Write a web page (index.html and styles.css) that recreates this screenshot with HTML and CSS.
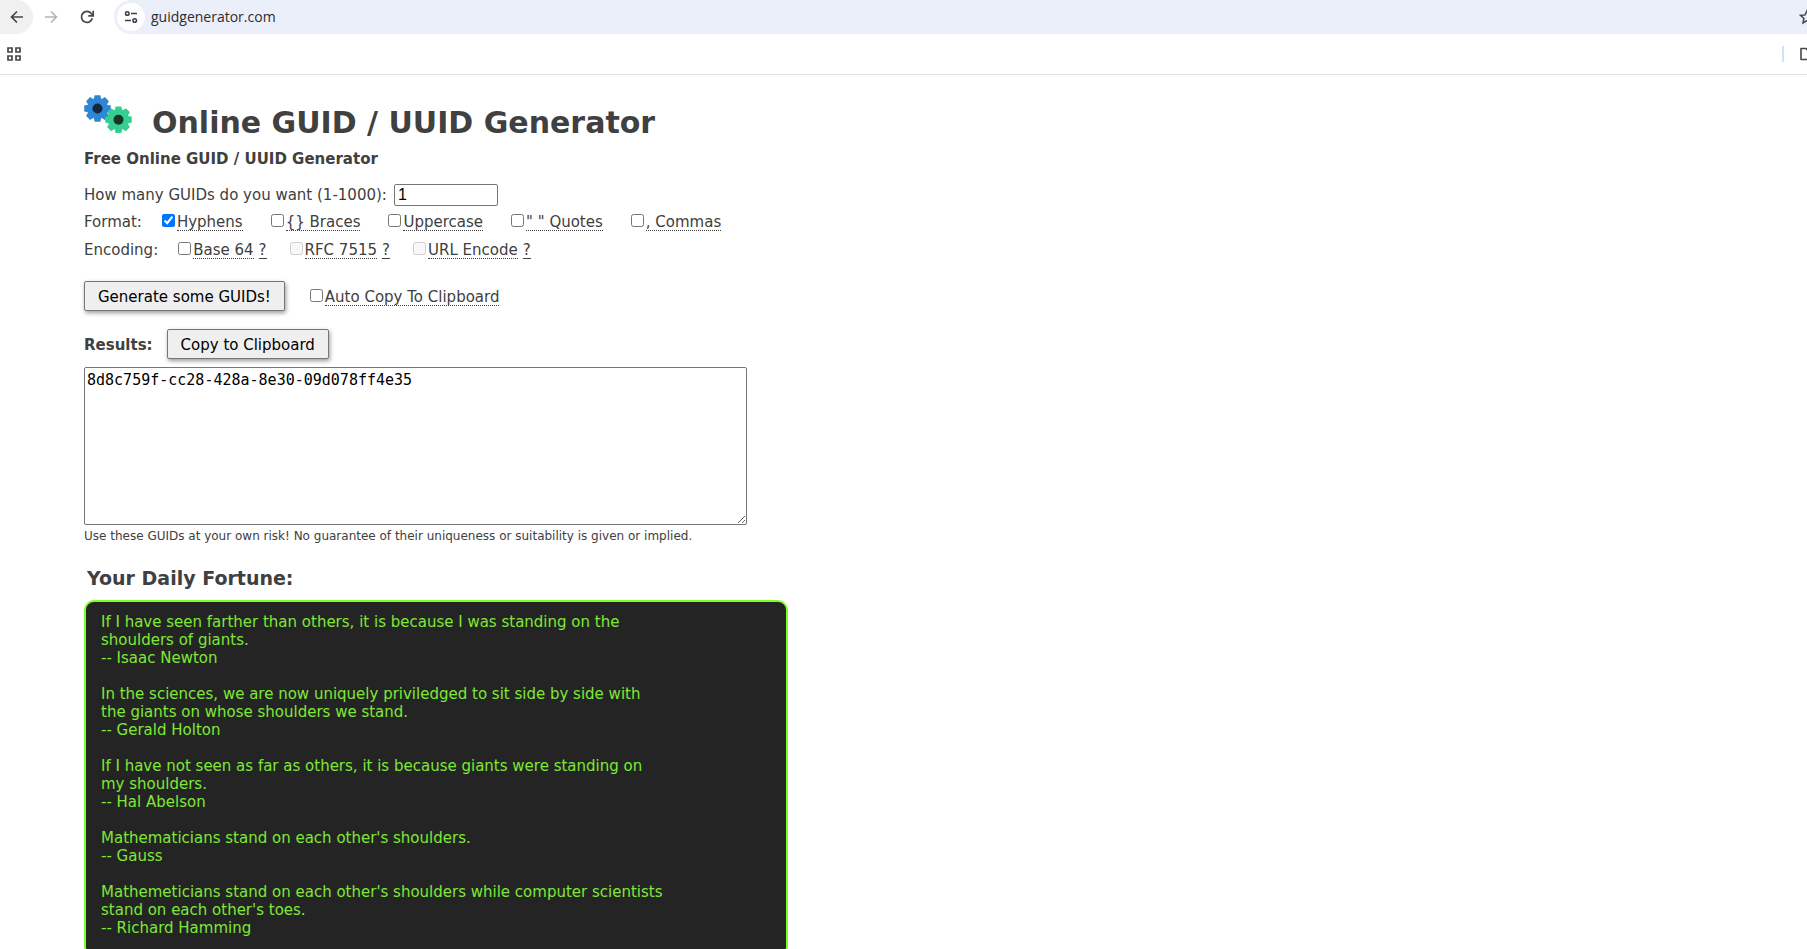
FILE: index.html
```html
<!DOCTYPE html>
<html lang="en">
<head>
<meta charset="utf-8">
<title>Online GUID / UUID Generator</title>
<link rel="stylesheet" href="styles.css">
</head>
<body>
<header class="browser">
  <div class="toolbar">
    <button class="nav-btn nav-active" aria-label="Back"><svg viewBox="0 0 16 16" width="16" height="16"><path d="M14 8H3M8 2.500 2.500 8 8 13.500" fill="none" stroke="#444749" stroke-width="1.700"/></svg></button>
    <button class="nav-btn" aria-label="Forward" disabled><svg viewBox="0 0 16 16" width="16" height="16"><path d="M2 8h11M8 2.500 13.500 8 8 13.500" fill="none" stroke="#b3b3b3" stroke-width="1.600"/></svg></button>
    <button class="nav-btn" aria-label="Reload"><svg viewBox="0 0 16 16" width="16" height="16"><path d="M13.300 9.300A5.500 5.500 0 1 1 12.300 4.500L14 6.300" fill="none" stroke="#444749" stroke-width="1.700"/><path d="M14.200 1.800v5H9.300" fill="none" stroke="#444749" stroke-width="1.700"/></svg></button>
    <div class="address">
      <button class="site-btn" aria-label="View site information"><svg viewBox="0 0 14 14" width="14" height="14"><g fill="none" stroke="#3c3f42" stroke-width="1.500"><circle cx="3.300" cy="3.500" r="1.800"/><path d="M7 3.500h6M1 10.500h6"/><circle cx="10.700" cy="10.500" r="1.800"/></g></svg></button>
      <input class="url" type="text" aria-label="Address" value="guidgenerator.com">
      <button class="edge-btn" aria-label="Bookmark this page"><svg viewBox="0 0 16 16" width="16" height="16"><path d="m8 1.700 1.900 4.200 4.600.5-3.400 3.100.9 4.500-4-2.300L4 14l.9-4.500-3.400-3.100 4.600-.5z" fill="none" stroke="#444749" stroke-width="1.500"/></svg></button>
    </div>
  </div>
  <div class="bookmarks">
    <button class="apps-btn" aria-label="Apps"><svg viewBox="0 0 14 14" width="14" height="14"><path d="M1 1h4v4H1zM9 1h4v4H9zM1 9h4v4H1zM9 9h4v4H9z" fill="none" stroke="#444749" stroke-width="1.700"/></svg></button>
    <span class="divider"></span>
    <button class="edge-btn" aria-label="All bookmarks"><svg viewBox="0 0 16 16" width="16" height="16"><path d="M2 2.500h5l2 2h6v9H2z" fill="none" stroke="#444749" stroke-width="1.600" stroke-linejoin="round"/></svg></button>
  </div>
</header>

<main class="page">
  <div class="title-row">
    <svg class="logo" viewBox="0 0 48 38" width="48" height="38" aria-hidden="true">
      <defs>
        <g id="gear">
          <circle r="10.500"/>
          <g id="teeth"><path d="M-4-8-2.900-13.300h5.800L4-8v16L2.900 13.300h-5.800L-4 8z"/><path d="M-4-8-2.900-13.300h5.800L4-8v16L2.900 13.300h-5.800L-4 8z" transform="rotate(90)"/></g>
          <use href="#teeth" transform="rotate(45)"/>
        </g>
      </defs>
      <g transform="translate(13.500 13.500)"><use href="#gear" fill="#2f86d6"/><circle r="5" fill="#14293d"/></g>
      <g transform="translate(34.500 24.700)"><use href="#gear" fill="#34cf90"/><circle r="5" fill="#163524"/></g>
    </svg>
    <h1 class="title">Online GUID / UUID Generator</h1>
  </div>
  <h2 class="subtitle">Free Online GUID / UUID Generator</h2>

  <form class="form">
    <div class="row count-row"><label for="count">How many GUIDs do you want (1-1000):</label><input class="count" id="count" type="text" inputmode="numeric" value="1"></div>
    <div class="row format-row">
      <span>Format:</span>
      <div class="options">
        <span class="option"><input type="checkbox" id="hyphens" checked><label for="hyphens">Hyphens</label></span>
        <span class="option"><input type="checkbox" id="braces"><label for="braces">{} Braces</label></span>
        <span class="option"><input type="checkbox" id="upper"><label for="upper">Uppercase</label></span>
        <span class="option"><input type="checkbox" id="quotes"><label for="quotes">" " Quotes</label></span>
        <span class="option"><input type="checkbox" id="commas"><label for="commas">, Commas</label></span>
      </div>
    </div>
    <div class="row encoding-row">
      <span>Encoding:</span>
      <div class="options encodings">
        <span class="option"><input type="checkbox" id="base64"><label for="base64">Base 64</label><a class="help" href="#base64">?</a></span>
        <span class="option"><input type="checkbox" id="rfc" disabled><label for="rfc">RFC 7515</label><a class="help" href="#rfc">?</a></span>
        <span class="option"><input type="checkbox" id="urlenc" disabled><label for="urlenc">URL Encode</label><a class="help" href="#urlenc">?</a></span>
      </div>
    </div>
    <div class="row generate-row">
      <button class="action" type="button">Generate some GUIDs!</button>
      <span class="option"><input type="checkbox" id="autocopy"><label for="autocopy">Auto Copy To Clipboard</label></span>
    </div>
    <div class="row results-row">
      <label class="results-label" for="results">Results:</label>
      <button class="action" type="button">Copy to Clipboard</button>
    </div>
    <textarea class="results" id="results" rows="8" spellcheck="false">8d8c759f-cc28-428a-8e30-09d078ff4e35</textarea>
    <p class="note">Use these GUIDs at your own risk! No guarantee of their uniqueness or suitability is given or implied.</p>
  </form>

  <h3 class="fortune-title">Your Daily Fortune:</h3>
  <section class="fortune">
    <p>If I have seen farther than others, it is because I was standing on the<br>shoulders of giants.<br>-- Isaac Newton</p>
    <p>In the sciences, we are now uniquely priviledged to sit side by side with<br>the giants on whose shoulders we stand.<br>-- Gerald Holton</p>
    <p>If I have not seen as far as others, it is because giants were standing on<br>my shoulders.<br>-- Hal Abelson</p>
    <p>Mathematicians stand on each other's shoulders.<br>-- Gauss</p>
    <p>Mathemeticians stand on each other's shoulders while computer scientists<br>stand on each other's toes.<br>-- Richard Hamming</p>
  </section>
</main>
</body>
</html>
```

FILE: styles.css
```css
* { box-sizing: border-box; }
html { overflow: hidden; }
body {
  margin: 0;
  background: #fff;
  color: #404040;
  font-family: Verdana, "DejaVu Sans", sans-serif;
  font-size: 15px;
  line-height: 18px;
}
h1, h2, h3, p { margin: 0; }
button { font: inherit; }
svg { display: block; }

/* Browser chrome */
.browser { border-bottom: 1px solid #dfe1e3; overflow: hidden; }
.browser button { border: 0; padding: 0; background: none; flex: none; }
.toolbar { display: flex; height: 34px; }
.nav-btn {
  display: grid;
  place-items: center;
  width: 36px;
  height: 34px;
}
.browser .nav-active { width: 33px; background: #f0f0f0; border-radius: 0 17px 17px 0; }
.address {
  display: flex;
  flex: 1;
  align-items: center;
  margin-left: 9px;
  padding-left: 3px;
  background: #ebeff9;
  border-radius: 17px 0 0 17px;
}
.browser .site-btn {
  display: grid;
  place-items: center;
  width: 28px;
  height: 28px;
  border-radius: 50%;
  background: #fff;
  margin-right: 6px;
}
.url {
  flex: 1;
  border: 0;
  padding: 0;
  background: none;
  color: #2b2d30;
  font: 14px/20px "Open Sans", "Noto Sans", sans-serif;
}
.browser .edge-btn { margin-right: -8px; }
.bookmarks { display: flex; align-items: center; height: 40px; padding-left: 7px; }
.divider { width: 2px; height: 16px; margin: 0 15px 0 auto; background: #d3e0fa; }

/* Page */
.page { padding: 20px 84px 0; }
.title-row { display: flex; gap: 20px; }
.logo { flex: none; }
.title { font-size: 30px; line-height: 36px; padding-top: 10px; }
.subtitle { font-size: 15px; line-height: 18px; margin-top: 9px; }
.row { display: flex; align-items: center; }
.count-row { height: 22px; margin-top: 16px; gap: 7px; }
.count {
  width: 104px;
  height: 22px;
  padding: 0 3px;
  border: 1px solid #767676;
  border-radius: 2px;
  color: #000;
  font: 16px "Liberation Sans", sans-serif;
}
.format-row { gap: 20px; margin-top: 7px; }
.options { display: flex; gap: 28px; }
.encoding-row { gap: 20px; margin-top: 10px; }
.encodings { gap: 23px; }
.option { display: flex; align-items: center; gap: 2px; }
.option input { margin: 0 0 4px; width: 13px; height: 13px; }
.option label { border-bottom: 1px dotted #404040; line-height: 16px; }
.help { color: inherit; margin-left: 3px; line-height: 16px; text-decoration: none; border-bottom: 1px solid #404040; }
.generate-row { gap: 25px; margin-top: 22px; }
.action {
  height: 30px;
  padding: 1px 13px 0;
  border: 1px solid #767676;
  border-radius: 2px;
  background: #efefef;
  box-shadow: 1px 2px 4px rgba(0, 0, 0, 0.4);
  color: #000;
}
.generate-row .option { padding-top: 2px; }
.results-row { gap: 14px; margin-top: 18px; }
.results-label { font-weight: bold; padding-top: 2px; }
.results {
  display: block;
  width: 663px;
  max-width: 100%;
  height: 158px;
  margin-top: 8px;
  padding: 2px;
  border: 1px solid #767676;
  border-radius: 2px;
  color: #000;
  font: 15px/20px "DejaVu Sans Mono", monospace;
}
.note { font-size: 12px; line-height: 16px; margin-top: 3px; }
.fortune-title { font-size: 19px; line-height: 24px; margin: 22px 0 10px; padding-left: 3px; }
.fortune {
  display: grid;
  gap: 18px;
  max-width: 704px;
  padding: 11px 15px 18px;
  border: 2px solid #7fff2a;
  border-radius: 10px;
  background: #242424;
  color: #7ee836;
}
```
